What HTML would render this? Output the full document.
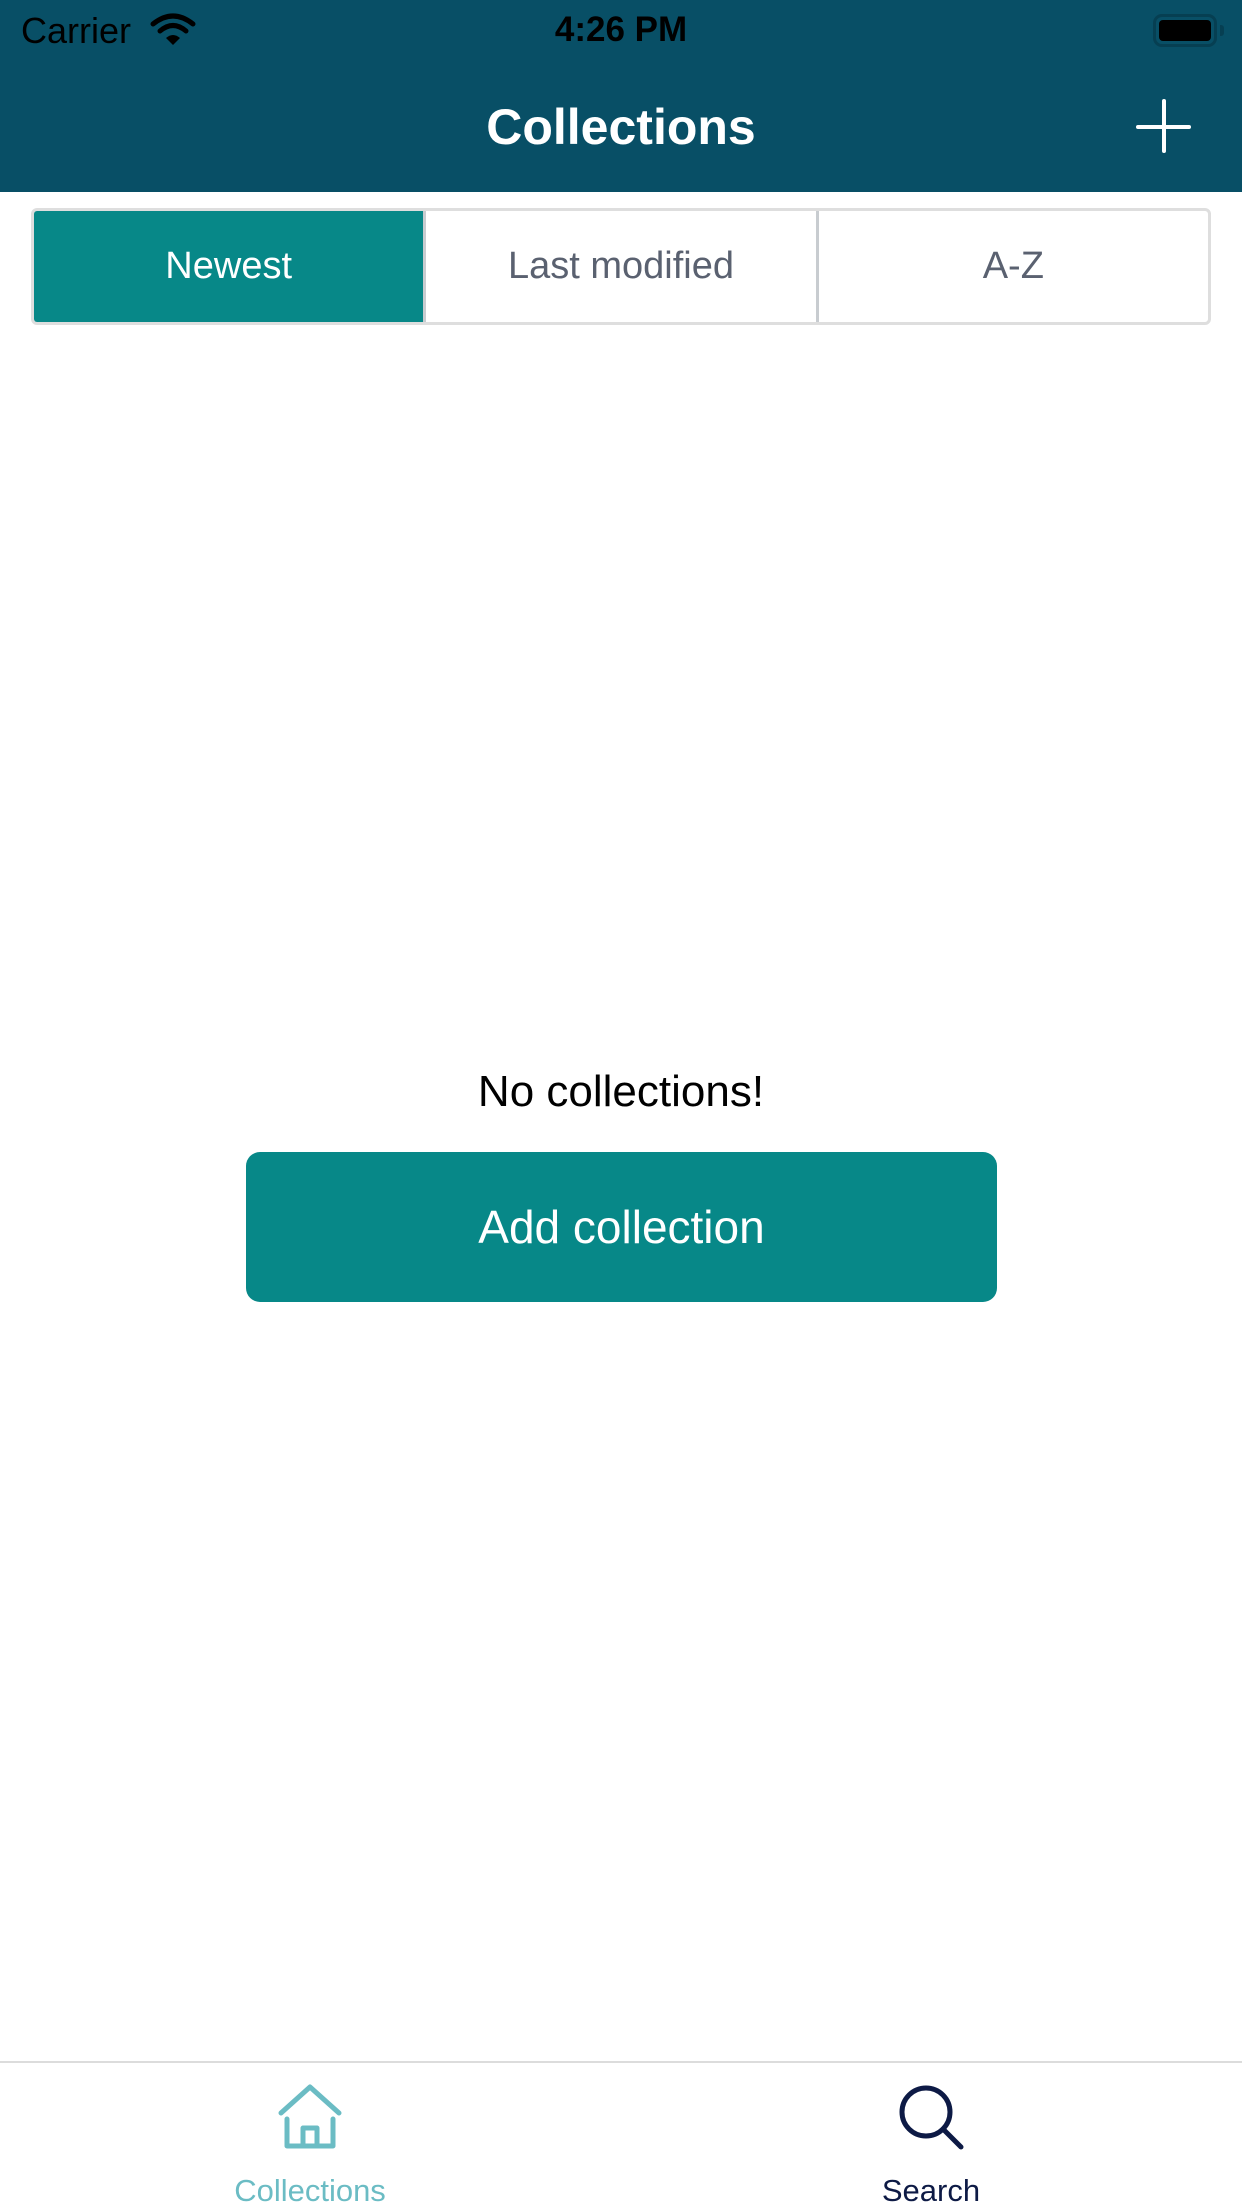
<!DOCTYPE html>
<html><head><meta charset="utf-8"><style>
*{margin:0;padding:0;box-sizing:border-box}
body{width:1242px;height:2208px;background:#fff;font-family:"Liberation Sans",sans-serif;position:relative;overflow:hidden}
.nav{position:absolute;left:0;top:0;width:1242px;height:192px;background:#084f66}
.abs{position:absolute;white-space:nowrap}
.seg{position:absolute;left:31px;top:208px;width:1180px;height:117px;border:3px solid #dedede;border-radius:6px;display:flex;overflow:hidden}
.seg div{flex:1;display:flex;align-items:center;justify-content:center;font-size:38px;color:#5a6170}
.seg div+div{border-left:3px solid #c8ccd0}
.seg .on{background:#078888;color:#fff}
.btn{position:absolute;left:246px;top:1152px;width:751px;height:150px;background:#078888;border-radius:14px;color:#fff;font-size:46px;display:flex;align-items:center;justify-content:center}
.tab{position:absolute;left:0;top:2061px;width:1242px;height:147px;border-top:2px solid #dcdcdc}
</style></head><body>
<div class="nav"></div>
<div class="abs" style="left:21px;top:10px;font-size:36px;color:#000">Carrier</div>
<svg class="abs" style="left:150px;top:12px" width="46" height="36" viewBox="0 0 46 36">
<path d="M3 12 Q23 -4 43 12" stroke="#000" stroke-width="5" fill="none" stroke-linecap="round"/>
<path d="M10 19 Q23 8 36 19" stroke="#000" stroke-width="5" fill="none" stroke-linecap="round"/>
<path d="M16 26 L23 33 L30 26 Q23 20 16 26Z" fill="#000"/></svg>
<div class="abs" style="left:0;width:1242px;text-align:center;top:10px;font-size:35px;font-weight:bold;color:#000">4:26 PM</div>
<div class="abs" style="left:1153px;top:14px;width:64px;height:33px;border:3px solid #063f52;border-radius:9px"></div>
<div class="abs" style="left:1159px;top:20px;width:52px;height:21px;background:#000;border-radius:4px"></div>
<div class="abs" style="left:1220px;top:25px;width:4px;height:11px;background:#063f52;border-radius:0 3px 3px 0"></div>
<div class="abs" style="left:0;width:1242px;text-align:center;top:98px;font-size:50px;font-weight:bold;color:#fff">Collections</div>
<div class="abs" style="left:1136px;top:125px;width:55px;height:4px;background:#fff;border-radius:2px"></div>
<div class="abs" style="left:1162px;top:99px;width:4px;height:54px;background:#fff;border-radius:2px"></div>
<div class="seg"><div class="on">Newest</div><div>Last modified</div><div>A-Z</div></div>
<div class="abs" style="left:0;width:1242px;text-align:center;top:1067px;font-size:44px;color:#000">No collections!</div>
<div class="btn">Add collection</div>
<div class="tab"></div>
<svg class="abs" style="left:278px;top:2083px" width="64" height="66" viewBox="0 0 64 66">
<path d="M3 30 L32 4 L61 30" stroke="#6bbcc4" stroke-width="5" fill="none" stroke-linecap="round" stroke-linejoin="round"/>
<path d="M9 36 V63 H55 V36" stroke="#6bbcc4" stroke-width="5" fill="none" stroke-linecap="round" stroke-linejoin="round"/>
<path d="M25 63 V45 H39 V63" stroke="#6bbcc4" stroke-width="5" fill="none" stroke-linejoin="round"/></svg>
<div class="abs" style="left:160px;width:300px;text-align:center;top:2173px;font-size:31px;color:#6bbcc4">Collections</div>
<svg class="abs" style="left:898px;top:2084px" width="68" height="68" viewBox="0 0 68 68">
<circle cx="28" cy="28" r="24" stroke="#0d1a45" stroke-width="5" fill="none"/>
<path d="M45 45 L63 63" stroke="#0d1a45" stroke-width="5" stroke-linecap="round"/></svg>
<div class="abs" style="left:781px;width:300px;text-align:center;top:2173px;font-size:31px;color:#0d1a45">Search</div>
</body></html>
